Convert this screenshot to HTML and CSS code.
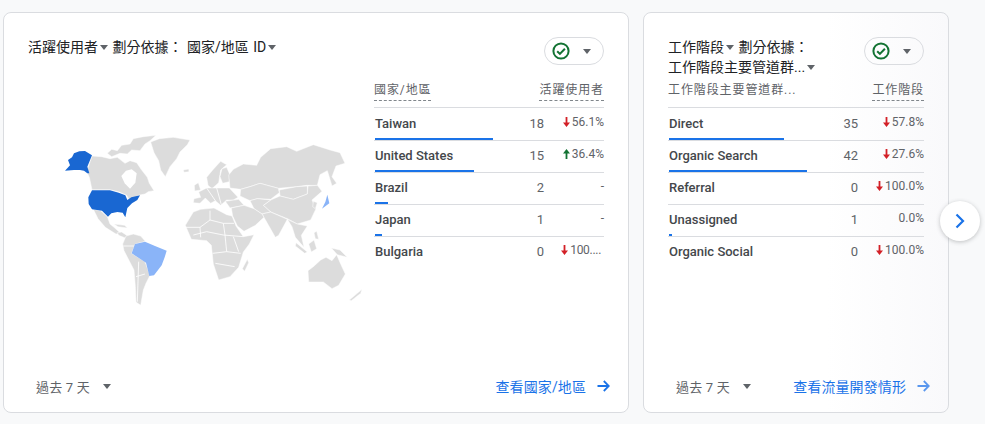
FILE: index.html
```html
<!DOCTYPE html>
<html lang="en">
<head>
  <meta charset="UTF-8" />
  <title>Reports snapshot</title>
  <link rel="stylesheet" href="styles.css">
</head>
<body>
  <div class="cards">
    <section class="card card-country">
      <div class="card-head">
        <div class="title">活躍使用者<span class="caret title-caret"></span> 劃分依據： 國家/地區 ID<span class="caret title-caret"></span></div>
        <div class="chip">
          <svg class="check" viewBox="0 0 18 18"><circle cx="9" cy="9" r="7.6"/><path d="M5.2 9.2l2.7 2.7 5-5.2"/></svg>
          <span class="caret"></span>
        </div>
      </div>
      <div class="card-body">
        <svg class="map" viewBox="0 0 1020 570">
          <!-- north america -->
          <polygon class="land" points="232,100 245,88 262,92 275,76 300,72 310,56 340,50 378,46 360,62 345,72 330,92 305,90 292,102 270,100 245,110"/>
          <polygon class="land" points="186,108 215,110 240,116 262,112 285,130 300,122 320,128 335,150 352,172 358,190 372,212 355,215 345,222 325,226 300,244 290,226 268,216 240,209 186,209 178,172 170,155"/>
          <polygon class="hole" points="274,168 288,152 305,148 320,160 316,188 300,206 284,190"/>
          <polygon class="land" points="362,66 388,56 430,52 480,60 472,74 450,96 440,116 420,140 406,170 392,150 386,122 372,98"/>
          <polygon class="land" points="190,268 212,272 232,290 240,312 252,322 272,340 258,342 226,322 204,296"/>
          <polygon class="land" points="262,338 275,336 296,350 286,354 266,346"/>
          <polygon class="land" points="252,312 284,316 292,324 264,320"/>
          <polygon class="dark" points="132,100 148,94 165,93 186,106 172,140 178,160 172,160 162,152 150,150 132,150 105,152 120,136 114,120 126,112"/>
          <polygon class="dark" points="186,211 240,211 266,218 286,226 292,240 304,232 330,226 322,240 306,250 292,264 286,292 278,278 262,276 244,280 234,290 216,272 186,268 176,252 175,232"/>
          <!-- south america -->
          <polygon class="land" points="288,348 310,342 332,348 346,364 316,372 305,400 345,425 360,466 348,490 340,510 332,556 318,546 316,500 312,450 282,392 278,372"/>
          <polygon class="light" points="315,372 345,365 375,378 410,392 404,412 395,436 372,466 358,468 348,428 305,400"/>
          <polyline class="border" points="280,378 312,378"/>
          <polyline class="border" points="318,470 345,462"/>
          <polyline class="border" points="326,425 322,545"/>
          <!-- europe and asia -->
          <polygon class="land" points="460,150 476,147 477,155 462,157"/>
          <polygon class="land" points="493,196 505,188 512,210 494,213"/>
          <polygon class="land" points="530,172 548,150 572,124 590,134 572,150 566,188 546,206 534,196"/>
          <polygon class="land" points="576,146 590,142 600,165 598,185 578,190 570,170"/>
          <polygon class="land" points="600,204 596,165 610,148 640,132 680,136 692,112 722,86 770,80 800,94 850,74 900,90 930,98 945,130 918,138 906,170 920,190 906,198 892,152 870,164 862,196 830,196 800,200 745,205 690,190 660,200 632,208"/>
          <polygon class="land" points="490,248 492,236 512,232 506,216 530,204 598,204 624,232 610,240 590,240 572,256 556,242 542,250 526,234 510,250"/>
          <polygon class="land" points="586,244 626,238 642,256 600,264"/>
          <polygon class="land" points="632,208 660,200 690,190 745,205 748,218 722,238 682,236 660,242 630,228"/>
          <polygon class="land" points="748,210 800,200 832,198 832,222 790,238 750,228"/>
          <polygon class="land" points="722,240 750,228 790,238 832,222 834,198 862,196 876,214 846,240 858,266 842,300 802,312 772,296 722,276 700,256"/>
          <polygon class="land" points="660,242 682,236 722,240 700,256 722,276 696,282 672,266"/>
          <polygon class="land" points="696,282 722,276 772,298 746,346 736,352 710,306"/>
          <polygon class="land" points="604,264 642,256 672,266 696,282 702,292 676,316 642,334 622,318 608,288"/>
          <polygon class="land" points="772,298 802,312 832,318 814,346 822,382 796,352 786,320"/>
          <polygon class="land" points="850,244 862,248 856,266 848,260"/>
          <polygon class="land" points="836,372 852,360 860,386 844,396"/>
          <polygon class="land" points="798,368 832,396 824,400 796,378"/>
          <polygon class="land" points="852,338 860,334 866,358 856,356"/>
          <polygon class="land" points="904,384 930,390 952,412 922,404"/>
          <polygon class="light" points="892,224 898,250 876,266 886,246"/>
          <polyline class="border" points="530,204 556,242"/>
          <polyline class="border" points="560,204 574,254"/>
          <!-- africa -->
          <polygon class="land" points="466,316 490,276 512,268 552,264 590,284 606,288 618,318 640,350 672,344 658,372 640,396 626,442 600,470 566,480 550,432 544,376 530,362 484,358"/>
          <polygon class="land" points="652,418 656,428 644,454 637,446"/>
          <polyline class="border" points="468,322 510,322 540,300 540,272"/>
          <polyline class="border" points="510,322 512,352"/>
          <polyline class="border" points="540,300 580,310 612,310"/>
          <polyline class="border" points="490,345 530,335 580,345 640,350"/>
          <polyline class="border" points="580,310 585,345 590,395 548,400"/>
          <polyline class="border" points="590,395 632,400"/>
          <polyline class="border" points="556,430 614,440"/>
          <polyline class="border" points="610,350 626,395"/>
          <!-- australia -->
          <polygon class="land" points="834,452 850,440 872,420 888,412 906,422 920,404 932,432 946,462 926,496 906,506 880,486 836,486"/>
          <polygon class="land" points="958,540 996,508 992,520 964,542"/>
        </svg>
        <div class="table">
          <div class="thead">
            <span class="th dashed">國家/地區</span>
            <span class="th dashed">活躍使用者</span>
          </div>
          <div class="row">
            <div class="cells"><span class="name">Taiwan</span><span class="val">18</span><span class="pct"><svg class="trend down" viewBox="0 0 7 10"><path d="M2.6 0h1.8v5.5H7L3.5 10 0 5.5h2.6z"/></svg>56.1%</span></div>
            <div class="bar" style="width: 118px"></div>
          </div>
          <div class="row">
            <div class="cells"><span class="name">United States</span><span class="val">15</span><span class="pct"><svg class="trend up" viewBox="0 0 7 10"><path d="M2.6 10h1.8V4.5H7L3.5 0 0 4.5h2.6z"/></svg>36.4%</span></div>
            <div class="bar" style="width: 99px"></div>
          </div>
          <div class="row">
            <div class="cells"><span class="name">Brazil</span><span class="val">2</span><span class="pct">-</span></div>
            <div class="bar" style="width: 13px"></div>
          </div>
          <div class="row">
            <div class="cells"><span class="name">Japan</span><span class="val">1</span><span class="pct">-</span></div>
            <div class="bar" style="width: 7px"></div>
          </div>
          <div class="row row-last">
            <div class="cells"><span class="name">Bulgaria</span><span class="val">0</span><span class="pct pct-cut"><svg class="trend down" viewBox="0 0 7 10"><path d="M2.6 0h1.8v5.5H7L3.5 10 0 5.5h2.6z"/></svg>100....</span></div>
          </div>
        </div>
      </div>
      <div class="card-foot">
        <div class="range">過去 7 天<span class="caret"></span></div>
        <a class="link">查看國家/地區
          <svg class="arrow" viewBox="0 0 13 12"><path d="M0.5 6h11M6.8 1l5 5-5 5"/></svg>
        </a>
      </div>
    </section>

    <section class="card card-channel">
      <div class="card-head">
        <div class="title title-narrow">工作階段<span class="caret title-caret"></span> 劃分依據：<br>工作階段主要管道群...<span class="caret title-caret"></span></div>
        <div class="chip">
          <svg class="check" viewBox="0 0 18 18"><circle cx="9" cy="9" r="7.6"/><path d="M5.2 9.2l2.7 2.7 5-5.2"/></svg>
          <span class="caret"></span>
        </div>
      </div>
      <div class="table table-wide">
        <div class="thead">
          <span class="th">工作階段主要管道群...</span>
          <span class="th dashed">工作階段</span>
        </div>
        <div class="row">
          <div class="cells"><span class="name">Direct</span><span class="val">35</span><span class="pct"><svg class="trend down" viewBox="0 0 7 10"><path d="M2.6 0h1.8v5.5H7L3.5 10 0 5.5h2.6z"/></svg>57.8%</span></div>
          <div class="bar" style="width: 115px"></div>
        </div>
        <div class="row">
          <div class="cells"><span class="name">Organic Search</span><span class="val">42</span><span class="pct"><svg class="trend down" viewBox="0 0 7 10"><path d="M2.6 0h1.8v5.5H7L3.5 10 0 5.5h2.6z"/></svg>27.6%</span></div>
          <div class="bar" style="width: 138px"></div>
        </div>
        <div class="row">
          <div class="cells"><span class="name">Referral</span><span class="val">0</span><span class="pct"><svg class="trend down" viewBox="0 0 7 10"><path d="M2.6 0h1.8v5.5H7L3.5 10 0 5.5h2.6z"/></svg>100.0%</span></div>
        </div>
        <div class="row">
          <div class="cells"><span class="name">Unassigned</span><span class="val">1</span><span class="pct">0.0%</span></div>
          <div class="bar" style="width: 3px"></div>
        </div>
        <div class="row row-last">
          <div class="cells"><span class="name">Organic Social</span><span class="val">0</span><span class="pct"><svg class="trend down" viewBox="0 0 7 10"><path d="M2.6 0h1.8v5.5H7L3.5 10 0 5.5h2.6z"/></svg>100.0%</span></div>
        </div>
      </div>
      <div class="card-foot">
        <div class="range">過去 7 天<span class="caret"></span></div>
        <a class="link">查看流量開發情形
          <svg class="arrow arrow-soft" viewBox="0 0 13 12"><path d="M0.5 6h11M6.8 1l5 5-5 5"/></svg>
        </a>
      </div>
    </section>
  </div>

  <button class="next">
    <svg viewBox="0 0 12 16"><path d="M2.5 1.5l6.5 6.5-6.5 6.5"/></svg>
  </button>
</body>
</html>
```

FILE: styles.css
```css
body {
  margin: 0;
  height: 424px;
  overflow: hidden;
  background-color: #f8f9fa;
  color: #202124;
  font-family: Roboto, "Noto Sans CJK TC", sans-serif;
}
.cards {
  display: flex;
  gap: 14px;
  padding: 12px 0 0 3px;
}
.card {
  box-sizing: border-box;
  height: 401px;
  padding: 24px 24px 14px;
  background: #fff;
  border: 1px solid #dadce0;
  border-radius: 8px;
  display: flex;
  flex-direction: column;
}
.card-country {
  width: 626px;
}
.card-channel {
  width: 306px;
  background: linear-gradient(to right, #fff 60%, #f9f9fb 100%);
}
.card-head {
  display: flex;
  justify-content: space-between;
  align-items: flex-start;
  height: 40px;
}
.title {
  font-size: 14px;
  line-height: 20px;
  word-spacing: 1px;
}
.caret {
  display: inline-block;
  width: 0;
  height: 0;
  border-left: 4.5px solid transparent;
  border-right: 4.5px solid transparent;
  border-top: 5px solid #5f6368;
}
.title-caret {
  margin: 0 0 2px 2px;
  vertical-align: middle;
}
.chip {
  box-sizing: border-box;
  width: 60px;
  height: 28px;
  border: 1px solid #dadce0;
  border-radius: 14px;
  display: flex;
  align-items: center;
  padding-left: 7px;
  gap: 13px;
}
.check {
  width: 18px;
  height: 18px;
  fill: none;
  stroke: #137333;
  stroke-width: 2;
}
.card-body {
  display: flex;
  justify-content: space-between;
}
.map {
  width: 340px;
  height: 190px;
  margin: 43px 0 0 2px;
}
.land {
  fill: #dcdcdc;
  stroke: #fff;
  stroke-width: 1.5;
}
.hole {
  fill: #fff;
}
.dark {
  fill: #1967d2;
}
.light {
  fill: #8ab4f8;
}
.border {
  fill: none;
  stroke: #fff;
  stroke-width: 2.5;
}
.table {
  width: 230px;
}
.table-wide {
  width: 256px;
}
.thead {
  box-sizing: border-box;
  height: 31px;
  padding-top: 5px;
  display: flex;
  justify-content: space-between;
  align-items: flex-start;
  border-bottom: 1px solid #dadce0;
}
.th {
  font-size: 12px;
  line-height: 16px;
  letter-spacing: 0.9px;
  color: #5f6368;
  padding-bottom: 2px;
}
.dashed {
  border-bottom: 1px dashed #80868b;
}
.row {
  box-sizing: border-box;
  height: 32px;
  border-bottom: 1px solid #dadce0;
  display: flex;
  flex-direction: column;
}
.row:nth-child(2) {
  height: 33px;
  padding-top: 1px;
}
.row-last {
  border-bottom: none;
}
.cells {
  height: 28px;
  display: flex;
  align-items: center;
}
.name {
  flex: 1;
  padding-left: 1px;
  font-size: 13px;
  font-weight: 500;
  color: #44474b;
}
.val {
  font-size: 13px;
  color: #5f6368;
}
.pct {
  width: 60px;
  text-align: right;
  font-size: 12px;
  color: #5f6368;
  margin-top: -2px;
  white-space: nowrap;
}
.card-channel .pct {
  width: 66px;
}
.pct-cut {
  box-sizing: border-box;
  padding-right: 3px;
  letter-spacing: -0.3px;
}
.trend {
  width: 7px;
  height: 10px;
  margin-right: 2px;
  vertical-align: -1px;
}
.down {
  fill: #d32027;
}
.up {
  fill: #137333;
}
.bar {
  height: 2px;
  margin-top: auto;
  margin-left: 1px;
  background-color: #1a73e8;
}
.card-foot {
  margin-top: auto;
  height: 24px;
  display: flex;
  justify-content: space-between;
  align-items: center;
  padding-left: 8px;
}
.range {
  font-size: 13px;
  letter-spacing: 0.2px;
  color: #5f6368;
  display: flex;
  align-items: center;
  gap: 13px;
}
.link {
  font-size: 14px;
  letter-spacing: 0.1px;
  color: #1a73e8;
  display: flex;
  align-items: center;
  gap: 11px;
  margin-right: -6px;
}
.arrow {
  width: 13px;
  height: 12px;
  fill: none;
  stroke: #1a73e8;
  stroke-width: 1.8;
}
.arrow-soft {
  stroke: #5a97ee;
}
.next {
  position: absolute;
  left: 940px;
  top: 201px;
  width: 40px;
  height: 40px;
  padding: 0;
  border: none;
  border-radius: 50%;
  background: #fff;
  box-shadow: 0 1px 4px rgba(60, 64, 67, 0.3);
  display: flex;
  align-items: center;
  justify-content: center;
}
.next svg {
  width: 12px;
  height: 16px;
  fill: none;
  stroke: #1a73e8;
  stroke-width: 2.2;
}
```
